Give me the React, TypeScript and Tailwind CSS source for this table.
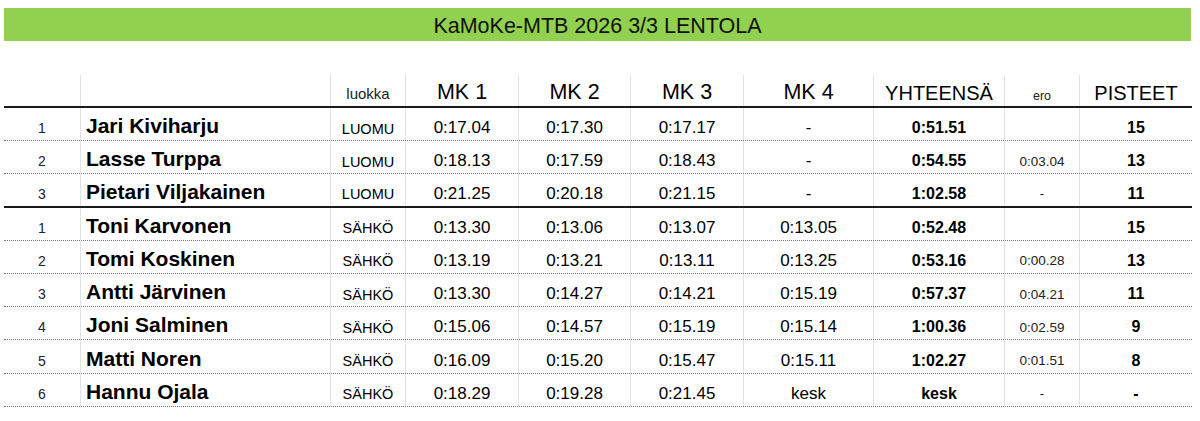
// Results sheet: KaMoKe-MTB 2026 3/3 Lentola

type Row = {
  rank: number;
  name: string;
  cls: string;
  mk: string[];
  total: string;
  ero: string;
  pts: string;
};

const luomu: Row[] = [
  { rank: 1, name: "Jari Kiviharju", cls: "LUOMU", mk: ["0:17.04", "0:17.30", "0:17.17", "-"], total: "0:51.51", ero: "", pts: "15" },
  { rank: 2, name: "Lasse Turppa", cls: "LUOMU", mk: ["0:18.13", "0:17.59", "0:18.43", "-"], total: "0:54.55", ero: "0:03.04", pts: "13" },
  { rank: 3, name: "Pietari Viljakainen", cls: "LUOMU", mk: ["0:21.25", "0:20.18", "0:21.15", "-"], total: "1:02.58", ero: "-", pts: "11" },
];

const sahko: Row[] = [
  { rank: 1, name: "Toni Karvonen", cls: "SÄHKÖ", mk: ["0:13.30", "0:13.06", "0:13.07", "0:13.05"], total: "0:52.48", ero: "", pts: "15" },
  { rank: 2, name: "Tomi Koskinen", cls: "SÄHKÖ", mk: ["0:13.19", "0:13.21", "0:13.11", "0:13.25"], total: "0:53.16", ero: "0:00.28", pts: "13" },
  { rank: 3, name: "Antti Järvinen", cls: "SÄHKÖ", mk: ["0:13.30", "0:14.27", "0:14.21", "0:15.19"], total: "0:57.37", ero: "0:04.21", pts: "11" },
  { rank: 4, name: "Joni Salminen", cls: "SÄHKÖ", mk: ["0:15.06", "0:14.57", "0:15.19", "0:15.14"], total: "1:00.36", ero: "0:02.59", pts: "9" },
  { rank: 5, name: "Matti Noren", cls: "SÄHKÖ", mk: ["0:16.09", "0:15.20", "0:15.47", "0:15.11"], total: "1:02.27", ero: "0:01.51", pts: "8" },
  { rank: 6, name: "Hannu Ojala", cls: "SÄHKÖ", mk: ["0:18.29", "0:19.28", "0:21.45", "kesk"], total: "kesk", ero: "-", pts: "-" },
];

const cell = "flex items-end justify-center leading-none border-l border-[#e2e2e2]";
const mkWidths = ["w-[113px]", "w-[112px]", "w-[113px]", "w-[130px]"];

function DataRow({ row, thick }: { row: Row; thick?: boolean }) {
  return (
    <div
      className={`flex h-[33.2px] ${
        thick ? "border-b-2 border-solid border-[#1a1a1a]" : "border-b border-dotted border-[#777]"
      }`}
    >
      <div className="w-[76px] flex items-end justify-center leading-none pb-[5px] text-[14px] text-[#222]">
        {row.rank}
      </div>
      <div className="w-[250px] flex items-end leading-none border-l border-[#e2e2e2] pl-[5px] pb-[4px] text-[21px] font-bold text-black">
        {row.name}
      </div>
      <div className={`${cell} w-[75px] pb-[4px] text-[14.5px] text-black`}>{row.cls}</div>
      {row.mk.map((t, i) => (
        <div key={i} className={`${cell} ${mkWidths[i]} pb-[4px] text-[17px] text-black`}>
          {t}
        </div>
      ))}
      <div className={`${cell} w-[131px] pb-[4px] text-[16px] font-bold text-black`}>{row.total}</div>
      <div className={`${cell} w-[75px] pb-[5px] text-[13.5px] text-[#222]`}>{row.ero}</div>
      <div className={`${cell} w-[113px] pb-[4px] text-[16px] font-bold text-black`}>{row.pts}</div>
    </div>
  );
}

export default function App() {
  return (
    <div className="w-[1200px] h-[421px] bg-white px-[4px] pt-[8px] font-['Liberation_Sans',Arial,sans-serif] text-black">
      <div className="h-[33px] w-[1187px] bg-[#92d050] flex items-end justify-center leading-none pb-[4px] text-[21.5px] text-[#111]">
        KaMoKe-MTB 2026 3/3 LENTOLA
      </div>

      <div className="mt-[34px] w-[1188px]">
        <div className="flex h-[33px] border-b-2 border-[#1a1a1a]">
          <div className="w-[76px]" />
          <div className="w-[250px] border-l border-[#e2e2e2]" />
          <div className={`${cell} w-[75px] pb-[5px] text-[15px] text-[#222]`}>luokka</div>
          <div className={`${cell} w-[113px] pb-[3px] text-[21.5px]`}>MK 1</div>
          <div className={`${cell} w-[112px] pb-[3px] text-[21.5px]`}>MK 2</div>
          <div className={`${cell} w-[113px] pb-[3px] text-[21.5px]`}>MK 3</div>
          <div className={`${cell} w-[130px] pb-[3px] text-[21.5px]`}>MK 4</div>
          <div className={`${cell} w-[131px] pb-[3px] text-[20px]`}>YHTEENSÄ</div>
          <div className={`${cell} w-[75px] pb-[4px] text-[12.5px] text-[#222]`}>ero</div>
          <div className={`${cell} w-[113px] pb-[3px] text-[20px]`}>PISTEET</div>
        </div>

        {luomu.map((r, i) => (
          <DataRow key={r.name} row={r} thick={i === luomu.length - 1} />
        ))}
        {sahko.map((r) => (
          <DataRow key={r.name} row={r} />
        ))}
      </div>
    </div>
  );
}
